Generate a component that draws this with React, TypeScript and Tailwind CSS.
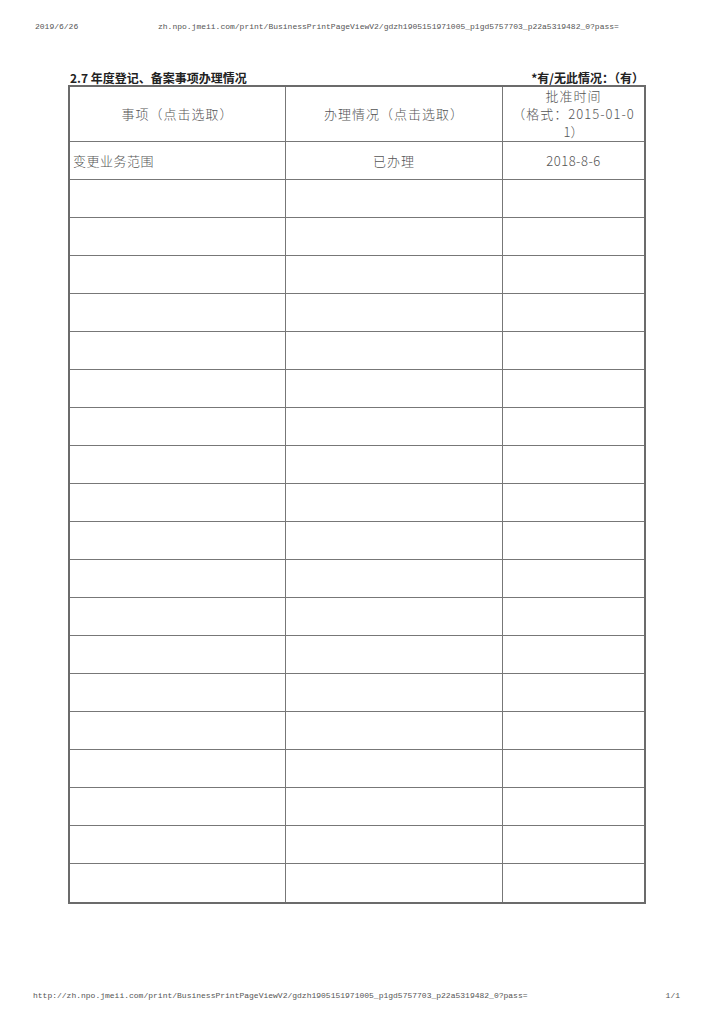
const pageUrl =
  'zh.npo.jmeii.com/print/BusinessPrintPageViewV2/gdzh1905151971005_p1gd5757703_p22a5319482_0?pass=';

type Row = { item: string; status: string; date: string };

const rows: Row[] = [
  { item: '变更业务范围', status: '已办理', date: '2018-8-6' },
  ...Array.from({ length: 19 }, () => ({ item: '', status: '', date: '' })),
];

const cjk = "font-['Noto_Sans_CJK_SC',sans-serif]";

export default function App() {
  return (
    <div className="w-[720px] h-[1019px] bg-white flex flex-col text-[#444]">
      {/* print header */}
      <div className="flex pt-[22px] pl-[35px] font-['Liberation_Mono',monospace] text-[8px] leading-[10px] text-[#555]">
        <span className="w-[123px]">2019/6/26</span>
        <span>{pageUrl}</span>
      </div>

      {/* section title */}
      <div className={`mt-[38px] ml-[70px] w-[574px] flex justify-between items-end ${cjk} font-bold text-[12px] leading-[15px] text-[#222]`}>
        <span>2.7 年度登记、备案事项办理情况</span>
        <span>*有/无此情况：（有）</span>
      </div>

      {/* table */}
      <div className={`ml-[68px] w-[578px] border-2 border-[#6b6b6b] ${cjk} font-light text-[13px] text-[#555]`}>
        <div className="grid grid-cols-[216px_217px_1fr] h-[55px] border-b border-[#777]">
          <div className="flex items-center justify-center tracking-[1px] border-r border-[#777]">
            事项（点击选取）
          </div>
          <div className="flex items-center justify-center tracking-[1px] border-r border-[#777]">
            办理情况（点击选取）
          </div>
          <div className="flex flex-col items-center justify-center leading-[18px]">
            <span className="tracking-[1px]">批准时间</span>
            <span className="tracking-[1px]">（格式：2015-01-0</span>
            <span>1）</span>
          </div>
        </div>
        {rows.map((row, i) => (
          <div
            key={i}
            className={`grid grid-cols-[216px_217px_1fr] h-[38px] ${i < rows.length - 1 ? 'border-b border-[#777]' : ''}`}
          >
            <div className="flex items-center pl-[3px] tracking-[0.5px] border-r border-[#777]">{row.item}</div>
            <div className="flex items-center justify-center tracking-[1px] border-r border-[#777]">{row.status}</div>
            <div className="flex items-center justify-center tracking-[0.5px]">{row.date}</div>
          </div>
        ))}
      </div>

      {/* print footer */}
      <div className="mt-auto mb-[18px] flex justify-between pl-[33px] pr-[40px] font-['Liberation_Mono',monospace] text-[8px] leading-[10px] text-[#555]">
        <span>http://{pageUrl}</span>
        <span>1/1</span>
      </div>
    </div>
  );
}
